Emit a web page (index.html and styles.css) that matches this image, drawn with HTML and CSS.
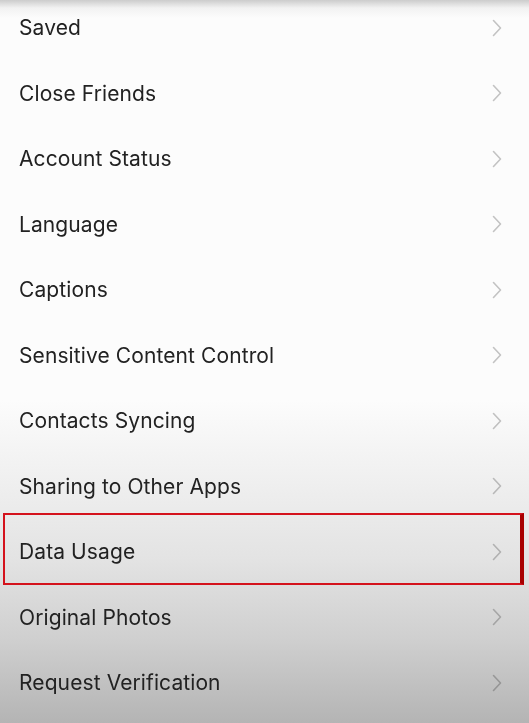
FILE: index.html
```html
<!DOCTYPE html>
<html lang="en">
<head>
  <meta charset="UTF-8">
  <title>Settings</title>
  <link rel="stylesheet" href="styles.css">
</head>
<body>
  <ul class="settings-list">
    <li class="row">Saved <svg class="chev" viewBox="0 0 10 18"><path d="M1.5 1.5 L8.5 9 L1.5 16.5"/></svg></li>
    <li class="row">Close Friends <svg class="chev" viewBox="0 0 10 18"><path d="M1.5 1.5 L8.5 9 L1.5 16.5"/></svg></li>
    <li class="row">Account Status <svg class="chev" viewBox="0 0 10 18"><path d="M1.5 1.5 L8.5 9 L1.5 16.5"/></svg></li>
    <li class="row">Language <svg class="chev" viewBox="0 0 10 18"><path d="M1.5 1.5 L8.5 9 L1.5 16.5"/></svg></li>
    <li class="row">Captions <svg class="chev" viewBox="0 0 10 18"><path d="M1.5 1.5 L8.5 9 L1.5 16.5"/></svg></li>
    <li class="row">Sensitive Content Control <svg class="chev" viewBox="0 0 10 18"><path d="M1.5 1.5 L8.5 9 L1.5 16.5"/></svg></li>
    <li class="row">Contacts Syncing <svg class="chev" viewBox="0 0 10 18"><path d="M1.5 1.5 L8.5 9 L1.5 16.5"/></svg></li>
    <li class="row">Sharing to Other Apps <svg class="chev" viewBox="0 0 10 18"><path d="M1.5 1.5 L8.5 9 L1.5 16.5"/></svg></li>
    <li class="row highlight">Data Usage <svg class="chev" viewBox="0 0 10 18"><path d="M1.5 1.5 L8.5 9 L1.5 16.5"/></svg></li>
    <li class="row">Original Photos <svg class="chev" viewBox="0 0 10 18"><path d="M1.5 1.5 L8.5 9 L1.5 16.5"/></svg></li>
    <li class="row">Request Verification <svg class="chev" viewBox="0 0 10 18"><path d="M1.5 1.5 L8.5 9 L1.5 16.5"/></svg></li>
  </ul>
</body>
</html>
```

FILE: styles.css
```css
* { box-sizing: border-box; margin: 0; padding: 0; }

html, body {
  width: 100%;
  height: 723px;
  overflow: hidden;
}

body {
  font-family: Inter, "Liberation Sans", sans-serif;
  color: #222;
  /* top shadow + darkening towards the bottom */
  background: linear-gradient(to bottom,
    #cccccc 0,
    #f2f2f2 8px,
    #fcfcfc 18px,
    #fcfcfc 400px,
    #f1f1f1 470px,
    #e3e3e3 560px,
    #cfcfcf 640px,
    #b4b4b4 723px);
}

.settings-list {
  list-style: none;
  margin-top: -5px;
}

.row {
  position: relative;
  height: 65.5px;
  display: flex;
  align-items: center;
  justify-content: space-between;
  padding: 0 27px 0 19px;
  font-size: 21px;
  font-weight: 400;
  letter-spacing: 0.1px;
}

.chev {
  width: 10px;
  height: 18px;
  fill: none;
  stroke: #c6c6c6;
  stroke-width: 1.6;
  stroke-linecap: round;
  stroke-linejoin: round;
  mix-blend-mode: multiply;
}

/* red annotation box */
.highlight::after {
  content: "";
  position: absolute;
  top: -6px;
  left: 3px;
  right: 5px;
  bottom: 0;
  border: 2px solid #d4121c;
  border-right: 4px solid #a80000;
}
```
